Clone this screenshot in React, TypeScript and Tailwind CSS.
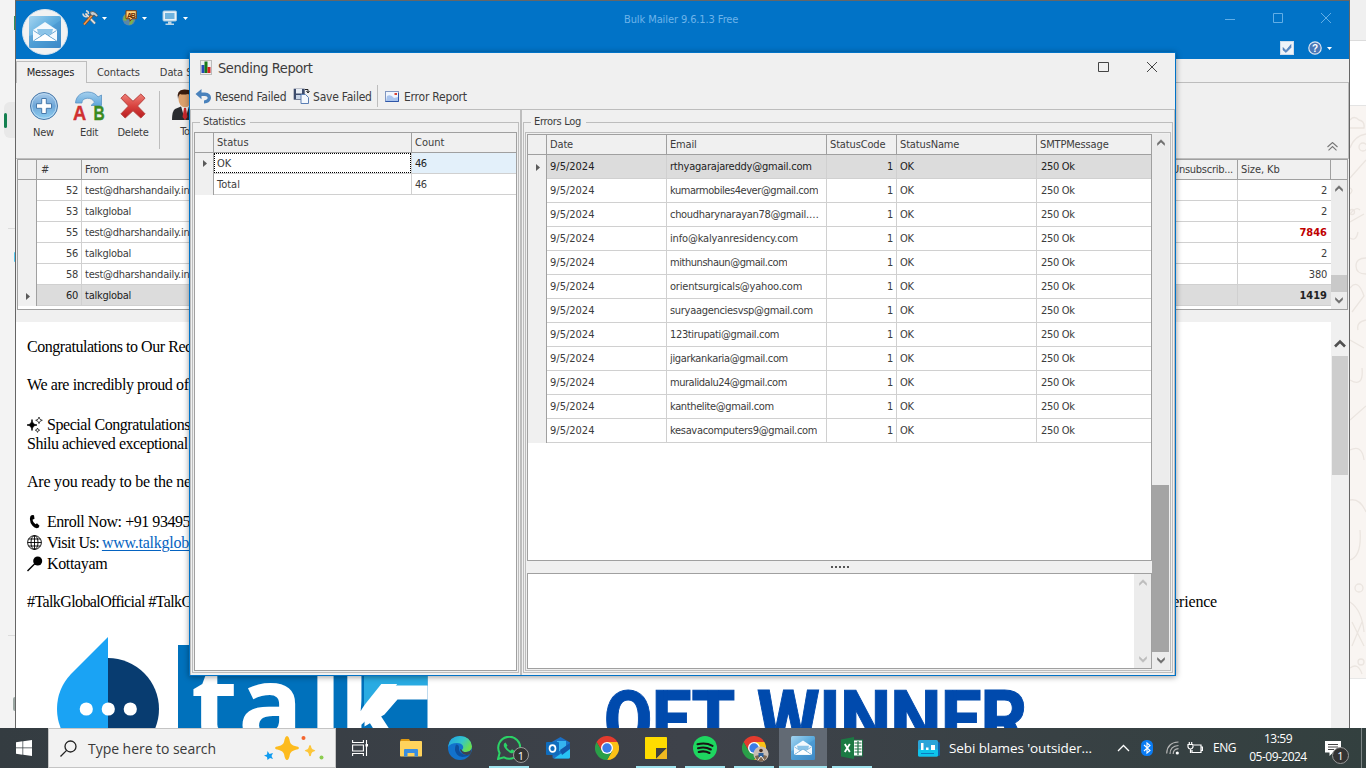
import React from "react";

const messages = [
  ["52", "test@dharshandaily.in", "2"],
  ["53", "talkglobal", "2"],
  ["55", "test@dharshandaily.in", "7846"],
  ["56", "talkglobal", "2"],
  ["58", "test@dharshandaily.in", "380"],
  ["60", "talkglobal", "1419"],
];

const emails = [
  ["rthyagarajareddy@gmail.com", "tracking-[-0.22px]"],
  ["kumarmobiles4ever@gmail.com", "tracking-[-0.44px]"],
  ["choudharynarayan78@gmail.com", "tracking-[-0.3px]"],
  ["info@kalyanresidency.com", "tracking-[-0.15px]"],
  ["mithunshaun@gmail.com", "tracking-[-0.45px]"],
  ["orientsurgicals@yahoo.com", "tracking-[-0.2px]"],
  ["suryaagenciesvsp@gmail.com", "tracking-[-0.3px]"],
  ["123tirupati@gmail.com", "tracking-[-0.35px]"],
  ["jigarkankaria@gmail.com", "tracking-[-0.35px]"],
  ["muralidalu24@gmail.com", "tracking-[-0.47px]"],
  ["kanthelite@gmail.com", "tracking-[-0.38px]"],
  ["kesavacomputers9@gmail.com", "tracking-[-0.32px]"],
];

function Caret({ className = "" }: { className?: string }) {
  return (
    <svg width="5" height="3" viewBox="0 0 5 3" className={className}>
      <path d="M0 0h5L2.5 3z" fill="currentColor" />
    </svg>
  );
}

function RowMarker() {
  return (
    <svg width="4" height="7" viewBox="0 0 4 7">
      <path d="M0 0l4 3.5L0 7z" fill="#5a5a5a" />
    </svg>
  );
}

function Chevron({ down = false, color = "#6e6e6e" }: { down?: boolean; color?: string }) {
  return (
    <svg width="8" height="7" viewBox="0 0 8 7" className={down ? "rotate-180" : ""}>
      <path d="M0.5 6.300V4.200L4 .7l3.500 3.500v2.100L4 3z" fill={color} stroke={color} strokeWidth=".6" />
    </svg>
  );
}

function MailTile({ size }: { size: number }) {
  return (
    <svg width={size} height={size} viewBox="0 0 32 32">
      <defs>
        <linearGradient id={"mt" + size} x1="0" y1="0" x2="1" y2="1">
          <stop offset="0" stopColor="#a4d4f0" />
          <stop offset=".5" stopColor="#5aaadd" />
          <stop offset="1" stopColor="#3f8ac8" />
        </linearGradient>
      </defs>
      <rect width="32" height="32" rx="2" fill={"url(#mt" + size + ")"} />
      <path d="M0 32V20Q16 16 32 4v28z" fill="#3a86c6" opacity=".35" />
      <path d="M4 14L16 6l12 8v11H4z" fill="#f4f9fd" />
      <path d="M8 13h16l-1 4-7 4-7-4z" fill="#8cc4e8" />
      <path d="M4.500 14.500L13 20 4.500 25M27.500 14.500L19 20l8.500 5M4.500 25L16 17.500 27.500 25" fill="none" stroke="#5b9fd0" strokeWidth=".9" />
      <path d="M5 25l11-7 11 7z" fill="#fff" />
    </svg>
  );
}

function ToolsIcon() {
  return (
    <svg width="16" height="16" viewBox="0 0 16 16">
      <path d="M3.500 3.500l9.500 10" stroke="#8c8c8c" strokeWidth="2.600" />
      <path d="M3.500 3.500l9.500 10" stroke="#e8e8e8" strokeWidth="1.400" />
      <path d="M1 3.500A3 3 0 0 0 5 6.500M4 .8A3 3 0 0 1 6.500 4" stroke="#d8d8d8" strokeWidth="1.600" fill="none" />
      <path d="M10.500 5L2 14.500" stroke="#8a4a1a" strokeWidth="3" />
      <path d="M10.500 5L2 14.500" stroke="#f09a50" strokeWidth="1.600" />
      <path d="M7.500 2.500Q11 0 14 3l2 2.500-1.500 1.500L12 5l-2 1z" fill="#c9cdd0" stroke="#444" strokeWidth=".7" />
    </svg>
  );
}

function LanguageIcon() {
  return (
    <svg width="16" height="16" viewBox="0 0 16 16">
      <circle cx="7" cy="9" r="6.500" fill="#5b87a8" />
      <path d="M2 6q3-3 5-2l-1 4-2 3-3-1zM8 10l4 0-2 4-3 1z" fill="#7db04c" />
      <path d="M4 .7h10.300v8H10l-2 2.500V8.700H4z" fill="#ffd27a" stroke="#7a3d10" strokeWidth="1" />
      <text x="5" y="7.500" fontSize="7" fontWeight="700" fill="#6b2b08" fontFamily="Liberation Sans" textLength="8.500">AB</text>
    </svg>
  );
}

function MonitorIcon() {
  return (
    <svg width="16" height="16" viewBox="0 0 16 16">
      <rect x="1" y="1" width="13.500" height="10" rx="1" fill="#e6f1f8" stroke="#a5c8de" />
      <rect x="3" y="3" width="9.500" height="6" fill="#6fb3de" />
      <path d="M6 11.500h3.500v2H12V15H3.500v-1.500H6z" fill="#bcd6e6" />
    </svg>
  );
}

function NewIcon() {
  return (
    <svg width="30" height="30" viewBox="0 0 30 30">
      <defs>
        <linearGradient id="nw" x1="0" y1="0" x2="0" y2="1">
          <stop offset="0" stopColor="#a9cbea" />
          <stop offset=".5" stopColor="#6ea6d8" />
          <stop offset="1" stopColor="#8fd0f2" />
        </linearGradient>
      </defs>
      <circle cx="15" cy="15" r="13.500" fill="url(#nw)" stroke="#4a78a8" strokeWidth="1" />
      <circle cx="15" cy="15" r="12.300" fill="none" stroke="#c4def2" strokeWidth=".8" />
      <path d="M12.700 7.500h4.600v5.200h5.200v4.600h-5.200v5.200h-4.600v-5.200H7.500v-4.600h5.200z" fill="#fff" stroke="#4779ab" strokeWidth="1" />
    </svg>
  );
}

function EditIcon() {
  return (
    <svg width="32" height="30" viewBox="0 0 32 30">
      <defs>
        <linearGradient id="ed" x1="0" y1="0" x2="0" y2="1">
          <stop offset="0" stopColor="#a6d0ee" />
          <stop offset="1" stopColor="#5fa6da" />
        </linearGradient>
      </defs>
      <path d="M2.500 12C3 4.500 9 1 15 1c5 0 8.500 2.500 10 5l3.500-2V14.500H18l3.500-3.300C20 8.500 17.500 7 14.500 7.300 10.500 7.500 9 9.500 9 12z" fill="url(#ed)" stroke="#5b93c4" strokeWidth=".8" />
      <text x="0" y="29" fontSize="20" fontWeight="700" fill="#d03030" stroke="#d03030" strokeWidth=".4" fontFamily="Liberation Sans" textLength="13" lengthAdjust="spacingAndGlyphs">A</text>
      <text x="20.500" y="29" fontSize="20" fontWeight="700" fill="#3b8a1e" stroke="#3b8a1e" strokeWidth=".4" fontFamily="Liberation Sans" textLength="11" lengthAdjust="spacingAndGlyphs">B</text>
    </svg>
  );
}

function DeleteIcon() {
  return (
    <svg width="26" height="26" viewBox="0 0 26 26">
      <defs>
        <linearGradient id="dl" x1="0" y1="0" x2="0" y2="1">
          <stop offset="0" stopColor="#ef8078" />
          <stop offset=".5" stopColor="#d9433f" />
          <stop offset="1" stopColor="#b81c20" />
        </linearGradient>
      </defs>
      <path d="M5.200 1L13 8.300 20.800 1 25 5.200 17.500 13 25 20.800 20.800 25 13 17.700 5.200 25 1 20.800 8.500 13 1 5.200z" fill="url(#dl)" stroke="#b8403c" strokeWidth="1" strokeLinejoin="round" />
    </svg>
  );
}

function PersonIcon() {
  return (
    <svg width="26" height="32" viewBox="0 0 26 32">
      <path d="M0 31Q0 22 3 20l6-2.500h8L23 20q3 2 3 11z" fill="#2a2c30" />
      <path d="M9 17l4 14 4-14z" fill="#f0f0f0" />
      <path d="M12 19h2l1.500 9-2.500 3-2.500-3z" fill="#c8282c" />
      <ellipse cx="13" cy="10" rx="6.500" ry="8.500" fill="#dba06c" />
      <path d="M6 10Q4 1 12 .5 22 0 20 10q-1-4-4-5-5 1-8 0-2 2-2 5z" fill="#3a1c0e" />
    </svg>
  );
}

function RibbonItem({ icon, label, className }: { icon: React.ReactNode; label: string; className: string }) {
  return (
    <div className={"flex flex-col items-center " + className}>
      <div className="flex h-[33px] items-center">{icon}</div>
      <span className="mt-[4px] leading-[14px]">{label}</span>
    </div>
  );
}

function MainWindow() {
  return (
    <div className="absolute left-[15px] top-0 flex h-[728px] w-[1335px] flex-col border-x border-t border-[#666] bg-[#f0f0f0] font-['DejaVu_Sans_Condensed','Noto_Sans',sans-serif] text-[11px] tracking-[-0.25px] text-[#3c3c3c]">
      <div className="flex h-[58px] shrink-0 bg-[#0173c7]">
        <div className="ml-[6px] mt-[8px] flex h-[46px] w-[46px] items-center justify-center rounded-full border border-[#d8e4ee] bg-[#f2f2f2]">
          <MailTile size={32} />
        </div>
        <div className="ml-[14px] mt-[9px] flex h-4 items-center text-white">
          <ToolsIcon />
          <Caret className="ml-[4px]" />
          <div className="w-[15px]" />
          <LanguageIcon />
          <Caret className="ml-[4px]" />
          <div className="w-[15px]" />
          <MonitorIcon />
          <Caret className="ml-[5px]" />
        </div>
        <div className="ml-[436px] mt-[11px] w-[120px] whitespace-nowrap leading-4 tracking-[-0.1px] text-[#6db4ea]">Bulk Mailer 9.6.1.3 Free</div>
        <div className="ml-auto flex flex-col">
          <svg width="124" height="40" viewBox="0 0 124 40" fill="none" stroke="#62aee6">
            <path d="M0 18.500h10M48.500 12.500h9v9h-9zM96 12l10 10M106 12L96 22" />
          </svg>
          <div className="ml-[55px] flex items-center text-white">
            <svg width="14" height="14" viewBox="0 0 14 14">
              <rect x=".5" y=".5" width="13" height="13" fill="#eef3f9" stroke="#cfdcea" />
              <path d="M3 6.500l3 3L11 3.500v3L6 11.500 3 9z" fill="#5a8cc8" stroke="#3b6aa8" strokeWidth=".5" />
            </svg>
            <svg width="14" height="14" viewBox="0 0 14 14" className="ml-[14px]">
              <circle cx="7" cy="7" r="6.200" fill="#4a78b8" stroke="#dce6f2" strokeWidth="1.200" />
              <text x="7" y="10.500" textAnchor="middle" fontSize="10" fontWeight="700" fill="#fff" fontFamily="Liberation Sans">?</text>
            </svg>
            <Caret className="ml-[5px]" />
          </div>
        </div>
      </div>

      <div className="flex h-[24px] shrink-0 items-end pt-[2px]">
        <div className="flex h-[22px] w-[71px] items-center justify-center border border-b-0 border-[#bdbdbd] pr-[2px] pt-[2px] tracking-[-0.1px] text-[#222]">Messages</div>
        <div className="flex h-[22px] flex-1 items-center border-b border-[#bdbdbd] pt-[3px] tracking-[-0.1px]">
          <span className="ml-[10px]">Contacts</span>
          <span className="ml-[20px]">Data Sources</span>
        </div>
      </div>

      <div className="flex h-[76px] shrink-0 border-b border-r border-[#bdbdbd]">
        <RibbonItem className="w-[55px] pt-[6px]" icon={<NewIcon />} label="New" />
        <RibbonItem className="w-[36px] pt-[6px]" icon={<EditIcon />} label="Edit" />
        <RibbonItem className="w-[52px] pt-[6px]" icon={<DeleteIcon />} label="Delete" />
        <div className="mt-[8px] h-[58px] w-px bg-[#bdbdbd]" />
        <RibbonItem className="w-[50px] pt-[5px]" icon={<PersonIcon />} label="To" />
        <svg width="11" height="9" viewBox="0 0 11 9" className="ml-auto mr-[10px] mt-[59px]" fill="none" stroke="#777" strokeWidth="1.100">
          <path d="M.5 5l5-4.500 5 4.500M1.500 8.300l4-3.800 4 3.800" />
        </svg>
      </div>

      <div className="mx-px flex h-[151px] shrink-0 flex-col border border-[#a0a0a0] bg-white">
        <div className="flex h-[20px] shrink-0 border-b border-[#a0a0a0] bg-[#f0f0f0]">
          <div className="w-[19px] border-r border-[#a0a0a0]" />
          <div className="flex w-[45px] items-center border-r border-[#a0a0a0] pl-[4px] pt-[2px]">#</div>
          <div className="flex w-[1078px] items-center border-r border-[#a0a0a0] pl-[3px] pt-[2px]">From</div>
          <div className="flex w-[78px] items-center justify-end border-r border-[#a0a0a0] pr-[4px] pt-[2px]">Unsubscrib...</div>
          <div className="flex w-[93px] items-center border-r border-[#a0a0a0] pl-[3px] pt-[2px] tracking-[-0.1px]">Size, Kb</div>
        </div>
        <div className="flex flex-1">
          <div className="flex w-[1313px] flex-col">
            {messages.map((m, i) => (
              <div key={m[0]} className={"flex h-[21px] " + (i === 5 ? "bg-[#dcdcdc] text-[#222]" : "")}>
                <div className="flex w-[19px] items-center justify-center border-r border-[#a0a0a0] bg-[#f0f0f0] pl-[2px] pt-px">{i === 5 && <RowMarker />}</div>
                <div className="flex w-[45px] items-center justify-end border-b border-r border-[#d0d0d0] pr-[3px] pt-[2px]">{m[0]}</div>
                <div className="flex w-[1078px] items-center border-b border-r border-[#d0d0d0] pl-[3px] pt-[2px]">{m[1]}</div>
                <div className="w-[78px] border-b border-r border-[#d0d0d0]" />
                <div className={"flex w-[93px] items-center justify-end border-b border-[#d0d0d0] pr-[4px] pt-[2px] " + (i === 2 ? "font-bold text-[#c00000] tracking-normal" : i === 5 ? "font-bold tracking-normal" : "")}>{m[2]}</div>
              </div>
            ))}
          </div>
          <div className="flex flex-1 flex-col items-center bg-[#ececec]">
            <div className="flex h-[17px] items-center"><Chevron /></div>
            <div className="mt-[78px] h-[17px] w-full bg-[#c9c9c9]" />
            <div className="flex h-[17px] items-center"><Chevron down /></div>
          </div>
        </div>
      </div>

      <div className="mt-[12px] flex flex-1 overflow-hidden">
        <MailBody />
        <div className="flex w-[18px] flex-col items-center bg-[#f0f0f0] pr-px pt-[16px]">
          <svg width="12" height="10" viewBox="0 0 12 10" fill="none" stroke="#505050" strokeWidth="2.600">
            <path d="M1 8.500l5-5 5 5" />
          </svg>
          <div className="mt-[8px] h-[119px] w-[16px] bg-[#cdcdcd]" />
        </div>
      </div>
    </div>
  );
}

function MailBody() {
  return (
    <div className="flex w-[1315px] flex-col overflow-hidden whitespace-nowrap bg-white pl-[11px] pt-[15px] font-['Liberation_Serif',serif] text-[16px] leading-[19px] tracking-[-0.45px] text-black">
      <div>Congratulations to Our Recent Achievers!</div>
      <div className="mt-[19px] tracking-[-0.4px]">We are incredibly proud of our students</div>
      <div className="mt-[21px] flex items-center">
        <svg width="16" height="16" viewBox="0 0 16 16" className="mr-[4px]">
          <path d="M5 2.500Q5.300 7.700 10 8 5.300 8.300 5 13.500 4.700 8.300 0 8 4.700 7.700 5 2.500z" fill="#000" stroke="#000" strokeWidth=".8" />
          <path d="M12 0q.3 3 3.300 3.300Q12.300 3.600 12 6.600q-.3-3-3.300-3.300Q11.700 3 12 0zM10.500 11q.2 2 2.200 2.200-2 .2-2.200 2.200-.2-2-2.200-2.200 2-.2 2.200-2.200z" fill="#fff" stroke="#000" strokeWidth=".7" />
        </svg>
        Special Congratulations to Shilu
      </div>
      <div>Shilu achieved exceptional results</div>
      <div className="mt-[19px] tracking-[-0.22px]">Are you ready to be the next achiever?</div>
      <div className="mt-[21px] flex items-center">
        <svg width="16" height="14" viewBox="0 0 16 14" className="mr-[4px]">
          <path d="M5 0l2 .3.5 3.500-2 1q.5 3 3 4.500l1.500-1 2.500 2.500-1 2q-3 1.500-6-2T3 3q0-2.500 2-3z" fill="#000" />
        </svg>
        Enroll Now: +91 93495 00000
      </div>
      <div className="mt-[2px] flex items-center">
        <svg width="15" height="15" viewBox="0 0 15 15" className="mr-[5px]" fill="none" stroke="#000" strokeWidth=".9">
          <circle cx="7.500" cy="7.500" r="6.900" />
          <ellipse cx="7.500" cy="7.500" rx="3.500" ry="6.900" />
          <path d="M7.500.5v14M.5 7.500h14M1.500 4h12M1.500 11h12" />
        </svg>
        Visit Us:&nbsp;<span className="-ml-px text-[#0563c1] underline underline-offset-2 tracking-[-0.25px]">www.talkglobal.in</span>
      </div>
      <div className="mt-[2px] flex items-center tracking-[-0.35px]">
        <svg width="16" height="16" viewBox="0 0 16 16" className="mr-[4px]">
          <circle cx="10.700" cy="5" r="4.500" fill="#000" />
          <path d="M8 7.500L.5 15" stroke="#000" strokeWidth="1.500" />
        </svg>
        Kottayam
      </div>
      <div className="mt-[19px] flex justify-between pr-[114px]">
        <span className="tracking-[-0.6px]">#TalkGlobalOfficial #TalkGlobal</span>
        <span className="tracking-[-0.2px]">#Experience</span>
      </div>
      <svg width="1100" height="118" viewBox="27 611 1100 118" className="shrink-0">
        <g>
          <path d="M108 637v123A51 51 0 0 1 57 709q0-20 14-35z" fill="#1aa3f4" />
          <path d="M108 658a51 51 0 0 1 0 102z" fill="#083c70" />
          <g fill="#fff">
            <circle cx="86.300" cy="709" r="6.600" />
            <circle cx="108.300" cy="709" r="6.600" />
            <circle cx="130.300" cy="709" r="6.600" />
          </g>
        </g>
        <rect x="178" y="645" width="249.500" height="90" fill="#0071bc" />
        <path d="M364 640h63.500v46H391l-27 29z" fill="#29abe2" />
        <path d="M391.500 685.500h36v14h-30l-13 15-20 12v-11z" fill="#fff" />
        <g fill="#fff" fontFamily="Open Sans" fontWeight="700" fontSize="108">
          <text x="191" y="743">t</text>
          <text x="238" y="743">a</text>
          <text x="309" y="743">l</text>
          <text x="340" y="743" textLength="58" lengthAdjust="spacingAndGlyphs">k</text>
        </g>
        <g fill="#004aad" stroke="#004aad" strokeWidth="1" fontFamily="Roboto" fontWeight="800" fontSize="80">
          <text x="604" y="747" textLength="131" lengthAdjust="spacingAndGlyphs">OET</text>
          <text x="757" y="747" textLength="270" lengthAdjust="spacingAndGlyphs">WINNER</text>
        </g>
      </svg>
    </div>
  );
}

function GroupTitle({ text }: { text: string }) {
  return (
    <div className="flex h-[18px] items-center">
      <div className="mt-[1px] h-px w-[8px] bg-[#bdbdbd]" />
      <span className="px-[3px]">{text}</span>
      <div className="ml-[2px] mt-[1px] h-px flex-1 bg-[#bdbdbd]" />
    </div>
  );
}

function StatisticsGroup() {
  return (
    <div className="flex w-[329px] shrink-0 flex-col border-l border-[#bdbdbd] pl-px pt-[3px]">
      <GroupTitle text="Statistics" />
      <div className="-mt-[8px] flex h-[550px] w-[327px] border border-t-0 border-[#bdbdbd] px-px pb-px pt-[9px]">
        <div className="flex flex-1 flex-col border border-[#a0a0a0] bg-white tracking-normal">
          <div className="flex h-[20px] shrink-0 border-b border-[#a0a0a0] bg-[#f0f0f0]">
            <div className="w-[19px] border-r border-[#a0a0a0]" />
            <div className="flex w-[198px] items-center border-r border-[#a0a0a0] pl-[3px] pt-[2px]">Status</div>
            <div className="flex items-center pl-[3px] pt-[2px]">Count</div>
          </div>
          <div className="flex h-[21px]">
            <div className="flex w-[19px] items-center justify-center border-r border-[#a0a0a0] bg-[#f0f0f0] pl-[2px]"><RowMarker /></div>
            <div className="flex w-[198px] border-b border-r border-[#d0d0d0]">
              <div className="flex flex-1 items-center border border-dotted border-black pl-[2px] pt-[2px]">OK</div>
            </div>
            <div className="flex flex-1 items-center border-b border-[#d0d0d0] bg-[#e3f0fa] pl-[3px] pt-[2px] tracking-[-0.5px] text-[#222]">46</div>
          </div>
          <div className="flex h-[21px]">
            <div className="w-[19px] border-r border-[#a0a0a0] bg-[#f0f0f0]" />
            <div className="flex w-[198px] items-center border-b border-r border-[#d0d0d0] pl-[3px] pt-[2px]">Total</div>
            <div className="flex flex-1 items-center border-b border-[#d0d0d0] pl-[3px] pt-[2px] tracking-[-0.5px]">46</div>
          </div>
        </div>
      </div>
    </div>
  );
}

function ErrorsGroup() {
  const line = "border-b border-r border-[#d0d0d0]";
  return (
    <div className="flex flex-1 flex-col border-r border-[#bdbdbd] pr-px pt-[3px]">
      <GroupTitle text="Errors Log" />
      <div className="-mt-[8px] flex h-[550px] border border-t-0 border-[#bdbdbd] px-px pb-px pt-[9px]">
        <div className="flex flex-1 border border-[#bdbdbd] pl-px pt-px">
          <div className="flex w-[625px] flex-col">
            <div className="flex h-[427px] flex-col border border-[#a0a0a0] bg-white">
              <div className="flex h-[20px] shrink-0 border-b border-[#a0a0a0] bg-[#f0f0f0] tracking-[-0.15px]">
                <div className="w-[19px] border-r border-[#a0a0a0]" />
                <div className="flex w-[120px] items-center border-r border-[#a0a0a0] pl-[3px] pt-[2px]">Date</div>
                <div className="flex w-[160px] items-center border-r border-[#a0a0a0] pl-[3px] pt-[2px]">Email</div>
                <div className="flex w-[70px] items-center border-r border-[#a0a0a0] pl-[3px] pt-[2px]">StatusCode</div>
                <div className="flex w-[140px] items-center border-r border-[#a0a0a0] pl-[3px] pt-[2px]">StatusName</div>
                <div className="flex items-center pl-[3px] pt-[2px]">SMTPMessage</div>
              </div>
              {emails.map(([e, tracking], i) => (
                <div key={e} className={"flex h-[24px] shrink-0 " + (i === 0 ? "bg-[#dcdcdc] text-[#222]" : "")}>
                  <div className="flex w-[19px] items-center justify-center border-r border-[#a0a0a0] bg-[#f0f0f0] pl-[2px]">{i === 0 && <RowMarker />}</div>
                  <div className={"flex w-[120px] items-center pl-[3px] pt-[2px] tracking-[0px] " + line}>9/5/2024</div>
                  <div className={"flex w-[160px] items-center pl-[3px] pr-[4px] pt-[2px] " + line}>
                    <span className={"truncate " + tracking}>{e}</span>
                  </div>
                  <div className={"flex w-[70px] items-center justify-end pr-[3px] pt-[2px] " + line}>1</div>
                  <div className={"flex w-[140px] items-center pl-[3px] pt-[2px] " + line}>OK</div>
                  <div className="flex flex-1 items-center border-b border-[#d0d0d0] pl-[4px] pt-[2px]">250 Ok</div>
                </div>
              ))}
            </div>
            <div className="flex h-[12px] items-center justify-center gap-[2px]">
              {[0, 1, 2, 3, 4].map((d) => (
                <div key={d} className="h-[2px] w-[2px] bg-[#555]" />
              ))}
            </div>
            <div className="flex h-[96px] justify-end border border-[#a0a0a0] bg-white">
              <div className="flex w-[17px] flex-col items-center justify-between bg-[#ececec] py-[5px]">
                <Chevron color="#bcbcbc" />
                <Chevron down color="#bcbcbc" />
              </div>
            </div>
          </div>
          <div className="flex w-[17px] flex-col items-center bg-[#ececec]">
            <div className="flex h-[17px] items-center"><Chevron /></div>
            <div className="mt-[334px] h-[167px] w-full bg-[#a4a4a4]" />
            <div className="flex h-[17px] items-center"><Chevron down /></div>
          </div>
        </div>
      </div>
    </div>
  );
}

function ReportDialog() {
  return (
    <div className="absolute left-[189px] top-[52px] flex h-[624px] w-[987px] flex-col border border-[#0173c7] bg-[#f0f0f0] font-['DejaVu_Sans_Condensed','Noto_Sans',sans-serif] text-[11px] tracking-[-0.3px] text-[#3c3c3c] shadow-[0_1px_6px_rgba(0,0,0,0.4)]">
      <div className="flex h-[30px] shrink-0 items-center pl-[10px]">
        <svg width="12" height="15" viewBox="0 0 12 15" className="-mt-[2px]">
          <rect x=".5" y=".5" width="11" height="14" fill="#eee" stroke="#bbb" />
          <rect x="1.500" y="5" width="3" height="8" fill="#2848b8" />
          <rect x="4.500" y="1.500" width="3" height="11.500" fill="#187818" />
          <rect x="7.500" y="7" width="3" height="6" fill="#d82020" />
        </svg>
        <span className="ml-[6px] mt-[2px] text-[14.5px] tracking-[-0.42px]">Sending Report</span>
        <svg width="60" height="12" viewBox="0 0 60 12" className="-mt-[2px] ml-auto mr-[17px]" fill="none" stroke="#444">
          <path d="M.5 1.500h10v9H.5zM49 1l10 10M59 1L49 11" />
        </svg>
      </div>
      <div className="flex h-[27px] shrink-0 items-center border-b border-[#bdbdbd] pl-[5px] text-[12px] tracking-[-0.22px]">
        <svg width="17" height="16" viewBox="0 0 17 16">
          <path d="M6.500 1v3.500H10q6 .5 6 5.500-.5 5-7 5.500v-3q3.500-.5 3.700-2.700Q12.500 8 10 8H6.500v3.300L.5 6z" fill="#4a82bc" />
        </svg>
        <span className="ml-[3px] w-[78px] whitespace-nowrap pt-[1px]">Resend Failed</span>
        <svg width="17" height="16" viewBox="0 0 17 16">
          <path d="M.7.700h11v11H.7z" fill="#3d4c6c" />
          <rect x="3" y="1" width="6" height="4.500" fill="#e8edf4" />
          <rect x="3" y="7" width="7" height="4" fill="#c9d6e8" />
          <path d="M8 6.500h4.500l3 3v6H8z" fill="#f4f8fd" stroke="#5b7fb4" />
          <path d="M12 1.500h3V4M13.500 3l1.500 2 1.500-2" fill="none" stroke="#222" />
        </svg>
        <span className="ml-[3px] w-[64px] whitespace-nowrap pt-[1px]">Save Failed</span>
        <div className="h-[22px] w-px bg-[#bdbdbd]" />
        <svg width="14" height="11" viewBox="0 0 14 11" className="ml-[7px]">
          <rect x=".5" y=".5" width="13" height="10" fill="#f0f5fd" stroke="#8096c0" />
          <rect x="9.500" y="2" width="2.500" height="2" fill="#d84030" />
          <path d="M2 5q4-2 7 2l4-1v4H1z" fill="#a9c4ee" />
          <path d="M.5 10.500h13V2" fill="none" stroke="#2f56a8" />
        </svg>
        <span className="ml-[5px] whitespace-nowrap pt-[1px]">Error Report</span>
      </div>
      <div className="flex flex-1">
        <StatisticsGroup />
        <div className="mx-px w-[2px] bg-[#bdbdbd]" />
        <ErrorsGroup />
      </div>
    </div>
  );
}

function Chrome() {
  return (
    <svg width="24" height="24" viewBox="0 0 24 24">
      <path d="M1.600 6A12 12 0 0 1 22.400 6H12L6.800 15z" fill="#e33b2e" />
      <path d="M12 6h10.400A12 12 0 0 1 12 24l5.200-9z" fill="#fbc116" />
      <path d="M1.600 6l5.200 9 5.200 3 5.200-3L12 24A12 12 0 0 1 1.600 6z" fill="#2a9f48" />
      <circle cx="12" cy="12" r="6" fill="#fff" />
      <circle cx="12" cy="12" r="4.700" fill="#3b7ce8" />
    </svg>
  );
}

function Task({ children, open = false, active = false }: { children: React.ReactNode; open?: boolean; active?: boolean }) {
  return (
    <div className={"flex h-[40px] w-[48px] flex-col items-center " + (active ? "bg-[#626a74]" : "")}>
      <div className="flex h-[38px] items-center pt-[2px]">{children}</div>
      <div className={"h-[2px] " + (active ? "w-full bg-[#9fe3ee]" : open ? "w-[40px] bg-[#9fe3ee]" : "")} />
    </div>
  );
}

function Taskbar() {
  return (
    <div className="absolute left-0 top-[728px] flex h-[40px] w-[1366px] items-center bg-gradient-to-r from-[#343c41] via-[#3e424a] to-[#33403f] font-['Open_Sans','Noto_Sans',sans-serif] text-white">
      <div className="flex w-[48px] justify-center">
        <svg width="16" height="16" viewBox="0 0 16 16" fill="#fff">
          <path d="M0 2.200l6.500-.9v6.300H0zM7.200 1.200L16 0v7.600H7.200zM0 8.300h6.500v6.400L0 13.800zM7.200 8.300H16V16l-8.800-1.200z" />
        </svg>
      </div>
      <div className="flex h-[40px] w-[288px] items-center border border-[#c4c4c4] bg-[#f2f2f2] pl-[11px]">
        <svg width="17" height="17" viewBox="0 0 17 17" fill="none" stroke="#222" strokeWidth="1.300">
          <circle cx="10.500" cy="6.500" r="5.500" />
          <path d="M6.600 10.400L.5 16.500" />
        </svg>
        <span className="ml-[11px] w-[176px] whitespace-nowrap text-[14px] tracking-[-0.04px] text-[#3a3a3a]">Type here to search</span>
        <svg width="61" height="26" viewBox="0 0 61 26">
          <path d="M23 1q2 0 3 6 1 3 5 4 4 .7 4 2t-4 2q-4 1-5 4-1 6-3 6t-3-6q-1-3-5-4-4-.7-4-2t4-2q4-1 5-4 1-6 3-6z" fill="#fdbb1e" />
          <path d="M46 10q1 0 1.500 3 .5 1.500 3 2 1.500.5 0 1.200-2.500.5-3 2-.5 3-1.500 3t-1.500-3q-.5-1.500-3-2-1.500-.5 0-1.200 2.500-.5 3-2 .5-3 1.500-3z" fill="#fcc63a" />
          <path d="M3.500 16l2 3 3.500-1-1.500 3 1.500 3-3-1-2.500 2-.5-3-3-1.500 3-1z" fill="#0f9bf0" />
          <circle cx="39.500" cy="3" r="2" fill="#f4652e" />
          <circle cx="57.500" cy="22.500" r="2" fill="#8ccc50" />
        </svg>
      </div>
      <div className="mr-[3px] flex w-[48px] justify-center">
        <svg width="17" height="16" viewBox="0 0 17 16" fill="none" stroke="#fff" strokeWidth="1.100">
          <path d="M.6 0v2.500h10.800V0M.6 16v-2.500h10.800V16M.6 5h10.800v6H.6zM14.500 0v16" />
          <rect x="13.500" y="4" width="2.500" height="2.500" fill="#fff" stroke="none" />
        </svg>
      </div>
      <div className="flex gap-px">
        <Task>
          <svg width="22" height="18" viewBox="0 0 22 18">
            <path d="M.5 1.200Q.5 0 2 0h7l1.500 2.500H.5z" fill="#e09a10" />
            <rect y="2" width="22" height="15.500" rx=".8" fill="#ffd35c" />
            <path d="M4 17.500V11q0-1 1-1h12q1 0 1 1v6.500h-3.500V14h-7v3.500z" fill="#3a8ee0" />
          </svg>
        </Task>
        <Task>
          <svg width="24" height="24" viewBox="0 0 24 24">
            <defs>
              <linearGradient id="eg" x1="0" y1="0" x2="1" y2=".5">
                <stop offset="0" stopColor="#1e9fe8" />
                <stop offset=".6" stopColor="#35c6c8" />
                <stop offset="1" stopColor="#6ade50" />
              </linearGradient>
            </defs>
            <circle cx="12" cy="12" r="12" fill="#1272cc" />
            <path d="M0 11Q1.500 0 12 0t12 10.500q-.5 5-6 5.500-4 0-4-2 2-1.500 1-4-1.500-3-6-3Q2.500 7 0 11z" fill="url(#eg)" />
            <path d="M8 8.500Q5.500 14 9 18.500t13 0.500l.5-.8Q18 20 14.500 18q-4-2.500-3.500-5.500.5-2-1-3.500z" fill="#0d4f9e" />
            <path d="M14 14q0 2 4 2 4-.2 5.500-3L22.500 18Q18 20 14.500 17.500 12 15.500 12 13z" fill="#3e4450" />
          </svg>
        </Task>
        <Task open>
          <div className="relative">
            <svg width="24" height="24" viewBox="0 0 24 24">
              <path d="M1 23l1.600-6A11 11 0 1 1 7 21.400z" fill="none" stroke="#2bd266" strokeWidth="2" />
              <path d="M8.500 6.500q-3 1.500-1 5t6 5.500q3.500 1.200 4.500-2l-3-1.700-1.500 1.500q-2.500-1-4-3.800l1-1.500z" fill="#2bd266" />
            </svg>
            <div className="absolute left-[16px] top-[11px] flex h-[16px] w-[16px] items-center justify-center rounded-full border border-[#999] bg-[#333] text-[11px] leading-none">1</div>
          </div>
        </Task>
        <Task>
          <svg width="24" height="24" viewBox="0 0 24 24">
            <path d="M4 7L14.500 1 24 6.500V21q0 1.500-1.500 1.500H8Q6.500 22.500 6.500 21V7z" fill="#1a6fc4" />
            <path d="M11 5h9v10h-9z" fill="#35b4f0" />
            <path d="M24 8v13q0 1.500-1.500 1.500H8L20 14z" fill="#28c2f4" />
            <path d="M14 14l10-7v6l-8 6z" fill="#1356a8" />
            <rect y="6" width="13" height="13" rx="1" fill="#0f6cbd" />
            <ellipse cx="6.500" cy="12.500" rx="3" ry="3.400" fill="none" stroke="#fff" strokeWidth="1.700" />
          </svg>
        </Task>
        <Task><Chrome /></Task>
        <Task open>
          <svg width="22" height="22" viewBox="0 0 22 22">
            <rect width="22" height="22" rx=".8" fill="#ffdc00" />
            <path d="M11 11h11L11 22z" fill="#404040" />
            <path d="M22 11v10q0 1-1 1H11z" fill="#f0b820" />
          </svg>
        </Task>
        <Task open>
          <svg width="24" height="24" viewBox="0 0 24 24">
            <circle cx="12" cy="12" r="12" fill="#1ed760" />
            <path d="M4.500 8.300q8-2.300 15 1.500M5 12.200q7-2 12.800 1.300M5.700 16q6-1.600 10.800 1" fill="none" stroke="#191414" strokeWidth="2.100" strokeLinecap="round" />
          </svg>
        </Task>
        <Task open>
          <div className="relative">
            <Chrome />
            <svg width="16" height="16" viewBox="0 0 16 16" className="absolute left-[11px] top-[10px]">
              <circle cx="8" cy="8" r="7.600" fill="#c9bdb4" />
              <path d="M2 10q6-2 12 0-1 5-6 5.500Q3 15 2 10z" fill="#7d6650" />
              <circle cx="8" cy="4.500" r="1.800" fill="#4a2e20" />
              <path d="M5.500 7h5v4h-5z" fill="#2f5f9a" />
              <path d="M5 14l3-4 3 4" stroke="#eee" fill="none" />
            </svg>
          </div>
        </Task>
        <Task open active><MailTile size={24} /></Task>
        <Task open>
          <svg width="22" height="22" viewBox="0 0 22 22">
            <rect x="12" y="3" width="9.500" height="16" fill="#fff" stroke="#1e7145" />
            <path d="M13.500 6h7M13.500 9h7M13.500 12h7M13.500 15h7M17 4v14" stroke="#1e7145" strokeWidth="1.200" />
            <path d="M0 2.500L13 0v22L0 19.500z" fill="#1b7a43" />
            <path d="M3.800 7l5 8M8.800 7l-5 8" stroke="#fff" strokeWidth="1.800" />
          </svg>
        </Task>
      </div>
      <svg width="22" height="17" viewBox="0 0 22 17" className="ml-[42px]">
        <rect x="6" y="2" width="16" height="14" rx="1.500" fill="#1060a8" />
        <rect width="20" height="16.500" rx="1.500" fill="#2aa4d8" />
        <rect y="9" width="20" height="7.500" rx="1.500" fill="#0ec4ec" />
        <path d="M3 3h2.500v7H3zM8 7.500h2.500V10H8zM13 5h4v5h-4z" fill="#fff" />
        <path d="M3 13.500h13" stroke="#0a7cc0" />
      </svg>
      <span className="ml-[9px] w-[165px] whitespace-nowrap text-[13.500px] tracking-[-0.1px]">Sebi blames 'outsider...</span>
      <svg width="13" height="8" viewBox="0 0 13 8" className="ml-[3px]" fill="none" stroke="#fff" strokeWidth="1.300">
        <path d="M1 7l5.500-5.500L12 7" />
      </svg>
      <svg width="12" height="16" viewBox="0 0 12 16" className="ml-[11px]">
        <rect width="12" height="16" rx="5.500" fill="#0a7cf4" />
        <path d="M3 5l6 5.500L6 13V3l3 2.500L3 11" fill="none" stroke="#fff" strokeWidth="1.100" />
      </svg>
      <svg width="14" height="14" viewBox="0 0 14 14" className="ml-[13px]" fill="none" stroke="#b5b5b5" strokeWidth="1.200">
        <path d="M.7 12.500Q1 1.500 12.500 1M4 13Q4 5 12.500 4.500M7.200 13q0-5 5.300-5.300" />
        <circle cx="11.300" cy="12" r="1.600" fill="#fff" stroke="none" />
      </svg>
      <svg width="16" height="12" viewBox="0 0 16 12" className="ml-[7px]" fill="none" stroke="#fff" strokeWidth="1.200">
        <path d="M7 3h7v7.500H5V8M14.500 5h1v3.500h-1M1 2.500h5V5Q5.500 7 3.500 7T1 5zM2.300 2.500V0M4.700 2.500V0M3.500 7v4" />
      </svg>
      <span className="ml-[10px] w-[26px] text-[12px] tracking-[-0.5px]">ENG</span>
      <div className="ml-[3px] flex w-[72px] flex-col items-center whitespace-nowrap text-[12px] leading-[18px] tracking-[-0.52px]">
        <span>13:59</span>
        <span>05-09-2024</span>
      </div>
      <div className="relative ml-[11px]">
        <svg width="16" height="15" viewBox="0 0 16 15">
          <path d="M0 0h16v11.500H8L4.500 15v-3.500H0z" fill="#fff" />
          <path d="M3 3.500h10M3 6h10M3 8.500h6" stroke="#444" />
        </svg>
        <div className="absolute left-[7px] top-[6px] flex h-[17px] w-[17px] items-center justify-center rounded-full border border-[#999] bg-[#333] text-[11px] leading-none">1</div>
      </div>
      <div className="ml-auto h-full w-[5px] border-l border-[#7d8586]" />
    </div>
  );
}

function Backdrop() {
  return (
    <div className="absolute inset-0 flex justify-between bg-[#f3f3f3]">
      <div className="flex w-[15px] flex-col items-end">
        <div className="mt-[16px] h-[14px] w-px bg-[#2e9460]" />
        <div className="mt-[72px] flex h-[36px] w-[11px] items-center rounded-l-md bg-[#e8e8e8]">
          <div className="h-[15px] w-[3px] rounded bg-[#148050]" />
        </div>
        <div className="mt-[90px] h-px w-[7px] bg-[#dcdcdc]" />
        <div className="mt-[23px] h-[10px] w-px rounded-l bg-[#55c8f0]" />
        <div className="mt-[373px] h-px w-[7px] bg-[#dcdcdc]" />
        <div className="mt-[61px] h-[14px] w-[2px] rounded-l-full bg-[#9aa6a2]" />
      </div>
      <div className="flex w-[16px] flex-col">
        <div className="h-[41px] border-b border-[#dcdcdc] bg-[#f0f0f0]" />
        <div className="h-[65px] border-b border-[#e4e4e4] bg-white" />
        <svg width="16" height="572" viewBox="0 106 16 572" className="bg-[#f9f5f2]" fill="none" stroke="#ebe5e0" strokeWidth="1.300">
          <path d="M0 120q4-5 9 0 6 1 5 8H0M16 134Q4 136 0 148M16 160L0 178M0 188q4 2 0 6M0 214q6-8 10-4M0 222l14-8M0 238q6 4 8-6M16 258q-10 0-10 8t10 8M0 288q8-10 14 8L2 312M16 320q-10 2-8 10M0 340l14 8M0 380q14 8 12-12M0 420l16-14M0 450q12-6 14 10M0 500q10-2 16 12M0 560q12-4 10-30M0 602q12 8 14 30M2 622l12 24M12 622L2 646M0 668q8-6 12 6" />
          <circle cx="13" cy="147" r="4" />
          <circle cx="2" cy="212" r="2.500" />
          <circle cx="9" cy="588" r="4" />
          <circle cx="11" cy="662" r="3" />
        </svg>
        <div className="flex-1 border-t border-[#e8e8e8] bg-white" />
      </div>
    </div>
  );
}

export default function App() {
  return (
    <div className="relative h-[768px] w-[1366px] overflow-hidden">
      <Backdrop />
      <MainWindow />
      <ReportDialog />
      <Taskbar />
    </div>
  );
}
